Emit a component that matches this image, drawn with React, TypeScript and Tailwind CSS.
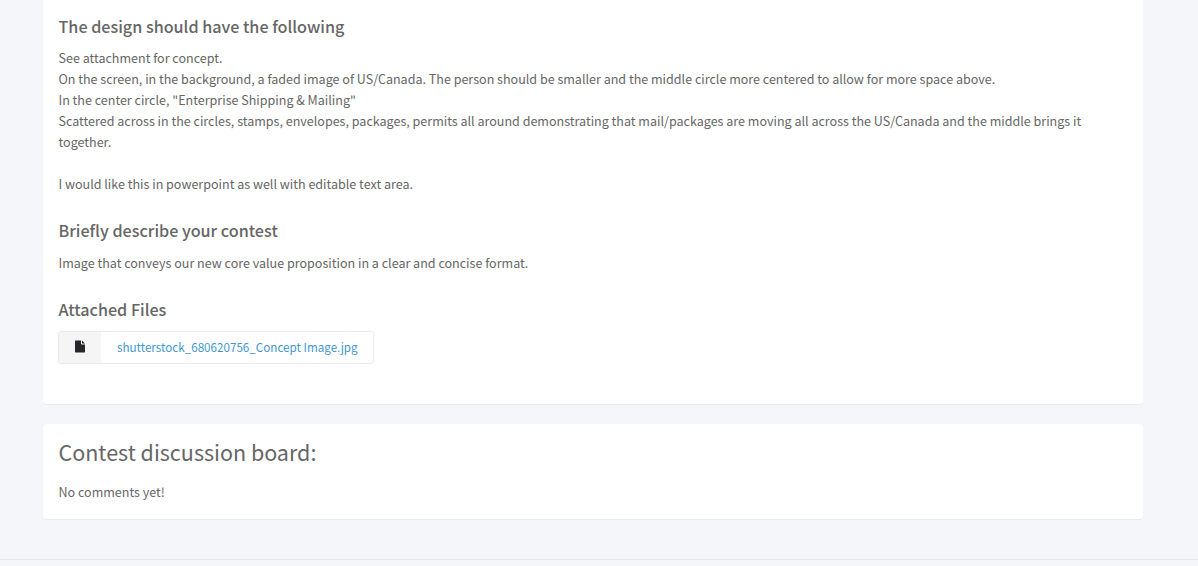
const font = "font-['Noto_Sans_CJK_SC','Source_Sans_Pro',sans-serif]";

function FileIcon() {
  return (
    <svg width="10" height="13" viewBox="0 0 10 12" className="fill-[#26262b]">
      <path d="M0 0.5C0 0.2 0.2 0 0.5 0H6V3.2C6 3.6 6.4 4 6.8 4H10V11.5C10 11.8 9.8 12 9.5 12H0.5C0.2 12 0 11.8 0 11.5V0.5ZM7 0L10 3H7V0Z" />
    </svg>
  );
}

function Heading({ children }: { children: React.ReactNode }) {
  return <h4 className="text-[16.15px] leading-[20px] font-medium text-[#666666]">{children}</h4>;
}

export default function App() {
  return (
    <div className={`${font} h-[566px] overflow-hidden bg-[#f5f6fa] text-[12.54px] leading-[21px] text-[#666666]`}>
      <div className="ml-[43px] flex w-[1100px] flex-col gap-[19px]">
        <section className="h-[405px] rounded-b-[4px] border-b border-[#e9eaec] bg-white pr-[15px] pl-[15.5px] pt-[16px]">
          <Heading>The design should have the following</Heading>
          <p className="mt-[11px]">
            See attachment for concept.
            <br />
            On the screen, in the background, a faded image of US/Canada. The person should be smaller and the middle circle more centered to allow for more space above.
            <br />
            In the center circle, "Enterprise Shipping &amp; Mailing"
            <br />
            Scattered across in the circles, stamps, envelopes, packages, permits all around demonstrating that mail/packages are moving all across the US/Canada and the middle brings it together.
            <br />
            <br />
            I would like this in powerpoint as well with editable text area.
          </p>
          <div className="mt-[26px]">
            <Heading>Briefly describe your contest</Heading>
          </div>
          <p className="mt-[12px]">Image that conveys our new core value proposition in a clear and concise format.</p>
          <div className="mt-[26px]">
            <Heading>Attached Files</Heading>
          </div>
          <div className="mt-[12px] -ml-[0.5px] flex h-[33px] w-[316px] items-stretch overflow-hidden rounded-[3px] border border-[#e9eaec]">
            <div className="flex w-[42px] shrink-0 items-center justify-center bg-[#f5f5f5] pb-[2px]">
              <FileIcon />
            </div>
            <a className="flex items-center pb-[3px] pl-[16px] text-[11.65px] whitespace-nowrap text-[#3f97d1]">shutterstock_680620756_Concept Image.jpg</a>
          </div>
        </section>
        <section className="h-[96px] rounded-[4px] border-b border-[#e9eaec] bg-white pr-[15px] pl-[15.5px] pt-[13px]">
          <h3 className="text-[21.5px] leading-[30px] font-normal text-[#666666]">Contest discussion board:</h3>
          <p className="mt-[14px]">No comments yet!</p>
        </section>
      </div>
      <div className="mt-[39px] border-t border-[#e6e7eb]" />
    </div>
  );
}
